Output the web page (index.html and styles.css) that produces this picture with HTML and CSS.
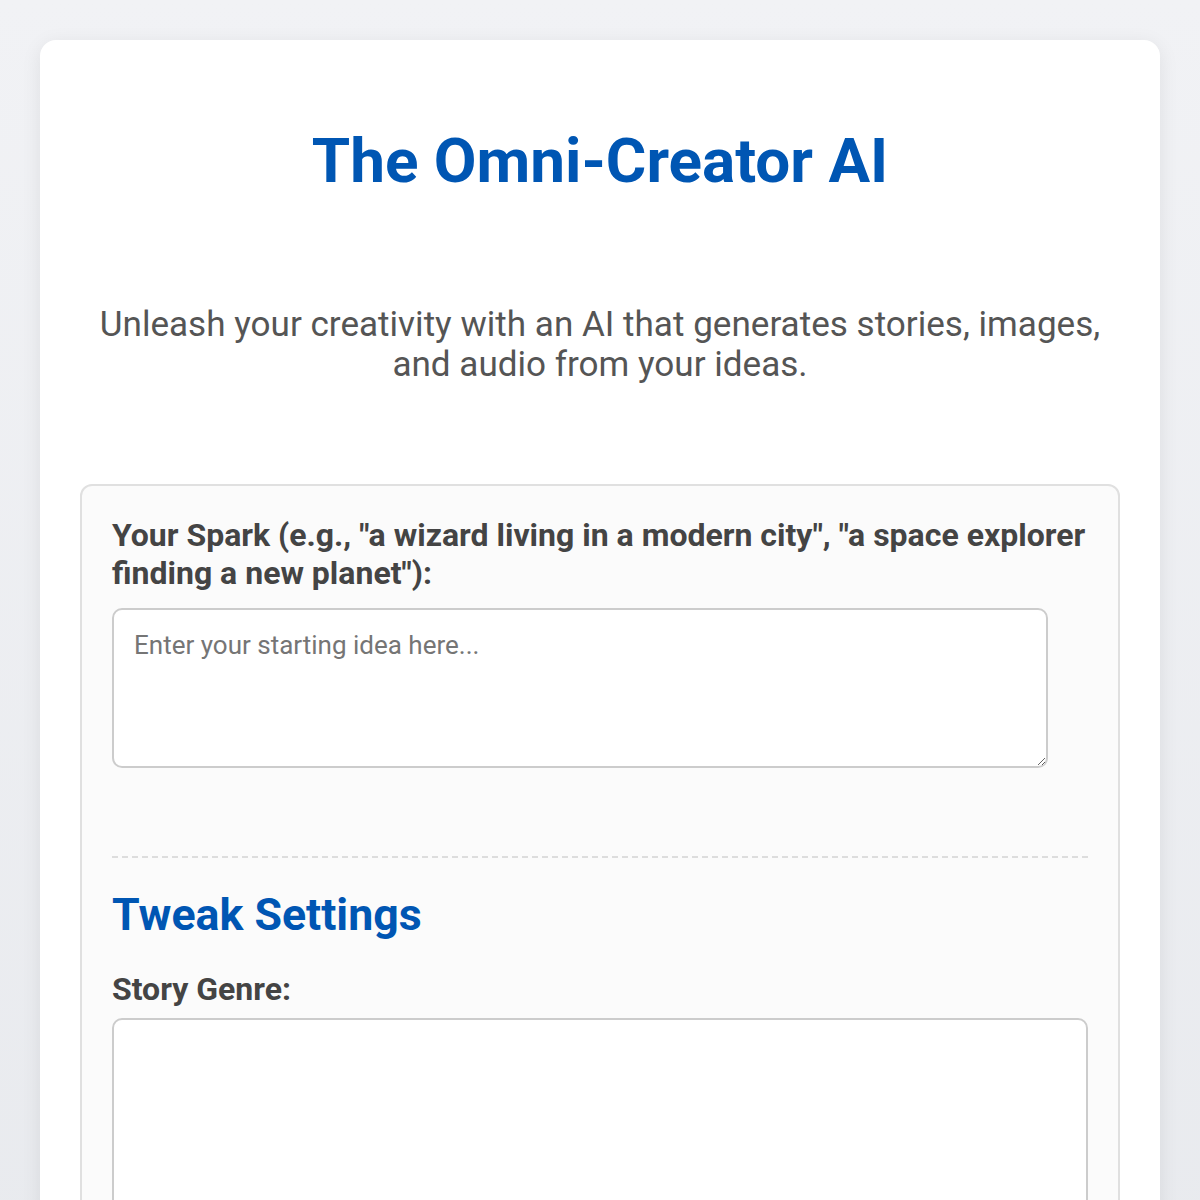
FILE: index.html
```html
<!DOCTYPE html>
<html>
<head>
<meta charset="utf-8">
<link rel="stylesheet" href="styles.css">
</head>
<body>
<div class="container">
  <h1 class="title">The Omni-Creator AI</h1>
  <p class="subtitle">Unleash your creativity with an AI that generates stories, images, and audio from your ideas.</p>
  <div class="panel">
    <label class="label" for="spark">Your Spark (e.g., "a wizard living in a modern city", "a space explorer finding a new planet"):</label>
    <textarea id="spark" class="spark" placeholder="Enter your starting idea here..."></textarea>
    <hr class="divider">
    <h2 class="section-title">Tweak Settings</h2>
    <label class="label genre-label" for="genre">Story Genre:</label>
    <div class="genre-box" id="genre"></div>
  </div>
</div>
</body>
</html>
```
FILE: styles.css
```css
html, body {
  margin: 0;
  padding: 0;
}
body {
  font-family: Roboto, "Noto Sans", sans-serif;
  background: linear-gradient(180deg, #f1f2f5 0%, #e7e9ed 100%);
  min-height: 1200px;
  padding: 40px;
  box-sizing: border-box;
}
.container {
  background: #ffffff;
  border-radius: 16px;
  box-shadow: 0 4px 20px rgba(0, 0, 0, 0.08);
  padding: 40px 40px 40px;
  min-height: 1300px;
}
.title {
  margin: 50px 0 0;
  text-align: center;
  color: #0056b3;
  font-size: 62px;
  font-weight: 700;
  line-height: 1;
}
.subtitle {
  margin: 112px 0 0;
  text-align: center;
  color: #555555;
  font-size: 35.1px;
  line-height: 40px;
}
.panel {
  margin-top: 100px;
  background: #fbfbfb;
  border: 2px solid #e0e0e0;
  border-radius: 12px;
  padding: 30px;
}
.label {
  display: block;
  color: #444444;
  font-size: 32px;
  font-weight: 700;
  line-height: 38px;
}
.spark {
  display: block;
  margin-top: 16px;
  width: 936px;
  height: 160px;
  box-sizing: border-box;
  border: 2px solid #cccccc;
  border-radius: 10px;
  padding: 20px;
  font-family: Roboto, sans-serif;
  font-size: 26px;
  color: #333;
  background: #ffffff;
  resize: vertical;
}
.spark::placeholder {
  color: #757575;
}
.divider {
  margin: 88px 0 0;
  border: none;
  border-top: 2px dashed #dddddd;
}
.section-title {
  margin: 29px 0 0;
  color: #0056b3;
  font-size: 44.7px;
  font-weight: 700;
  line-height: 56px;
}
.genre-label {
  margin-top: 27px;
}
.genre-box {
  margin-top: 10px;
  height: 300px;
  border: 2px solid #cccccc;
  border-radius: 10px;
  background: #ffffff;
}
```
